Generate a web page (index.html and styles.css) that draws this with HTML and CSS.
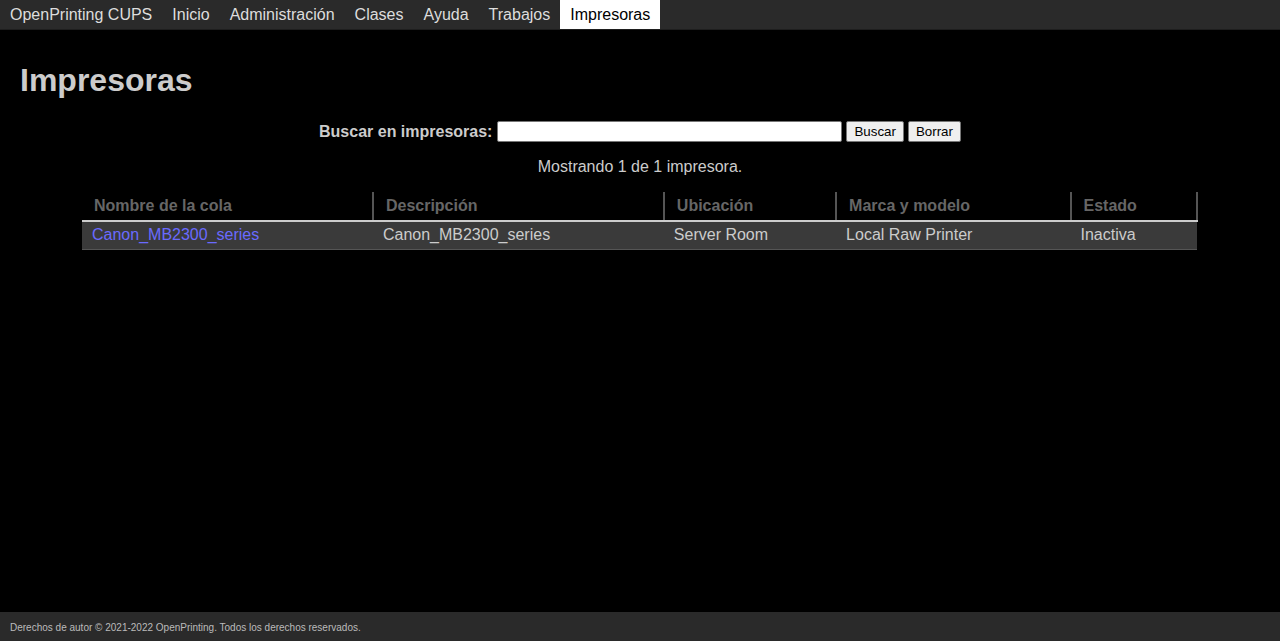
FILE: index.html
```html
<!DOCTYPE html>
<html lang="es">
<head>
<meta charset="utf-8">
<title>Impresoras - CUPS</title>
<link rel="stylesheet" href="styles.css">
</head>
<body>
<div class="page">
  <nav class="header">
    <a class="nav-item" href="#">OpenPrinting CUPS</a>
    <a class="nav-item" href="#">Inicio</a>
    <a class="nav-item" href="#">Administración</a>
    <a class="nav-item" href="#">Clases</a>
    <a class="nav-item" href="#">Ayuda</a>
    <a class="nav-item" href="#">Trabajos</a>
    <a class="nav-item active" href="#">Impresoras</a>
  </nav>
  <main class="body">
    <h1 class="title">Impresoras</h1>
    <form class="search">
      <label class="search-label">Buscar en impresoras:</label>
      <input class="search-input" type="text">
      <button class="btn" type="button">Buscar</button>
      <button class="btn" type="button">Borrar</button>
    </form>
    <p class="count">Mostrando 1 de 1 impresora.</p>
    <table class="list">
      <thead>
        <tr>
          <th class="c1">Nombre de la cola</th>
          <th class="c2">Descripción</th>
          <th class="c3">Ubicación</th>
          <th class="c4">Marca y modelo</th>
          <th class="c5">Estado</th>
        </tr>
      </thead>
      <tbody>
        <tr>
          <td><a class="link" href="#">Canon_MB2300_series</a></td>
          <td>Canon_MB2300_series</td>
          <td>Server Room</td>
          <td>Local Raw Printer</td>
          <td>Inactiva</td>
        </tr>
      </tbody>
    </table>
  </main>
  <footer class="footer">Derechos de autor © 2021-2022 OpenPrinting. Todos los derechos reservados.</footer>
</div>
</body>
</html>
```
FILE: styles.css
```css
html, body {
  margin: 0;
  padding: 0;
  height: 100%;
  background: #000;
  font-family: "Liberation Sans", Arial, sans-serif;
  color: #ccc;
}
.page {
  display: flex;
  flex-direction: column;
  min-height: 100vh;
}
.header {
  display: flex;
  background: #2a2a2a;
  height: 29px;
  border-bottom: 1px solid #1e1e1e;
}
.nav-item {
  display: block;
  padding: 0 10px;
  line-height: 29px;
  font-size: 16px;
  color: #ddd;
  text-decoration: none;
}
.nav-item.active {
  background: #fff;
  color: #000;
}
.body {
  flex: 1;
  padding: 0 20px;
}
.title {
  margin: 32px 0 0 0;
  font-size: 32px;
  line-height: 37px;
  font-weight: bold;
  color: #ccc;
}
.search {
  display: flex;
  justify-content: center;
  align-items: center;
  margin-top: 21px;
  height: 23px;
}
.search-label {
  font-weight: bold;
  font-size: 16px;
  color: #ccc;
  margin-right: 5px;
}
.search-input {
  width: 345px;
  height: 21px;
  box-sizing: border-box;
  border: 1px solid #767676;
  border-radius: 2px;
  background: #fff;
  padding: 1px 2px;
  margin: 0 4px 0 0;
}
.btn {
  font-family: "Liberation Sans", Arial, sans-serif;
  font-size: 13.33px;
  height: 21px;
  padding: 1px 7px;
  background: #efefef;
  color: #000;
  border: 1px solid #767676;
  border-radius: 2px;
  margin: 0 4px 0 0;
}
.btn:last-child { margin-right: 0; }
.count {
  text-align: center;
  font-size: 16px;
  margin: 14px 0 0 0;
  line-height: 20px;
}
.list {
  margin: 15px auto 0 auto;
  width: 1116px;
  border-collapse: collapse;
  font-size: 16px;
}
.list th {
  text-align: left;
  color: #666;
  font-weight: bold;
  padding: 4px 10px 4px 12px;
  height: 20px;
  border-right: 2px solid #555;
  border-bottom: 2px solid #ccc;
}
.list td {
  background: #3a3a3a;
  color: #ccc;
  padding: 3px 10px 4px 10px;
  height: 20px;
  border-bottom: 1px solid #555;
}
.c1 { width: 269px; }
.c2 { width: 268px; }
.c3 { width: 149px; }
.c4 { width: 212px; }
.c5 { width: 103px; }
.link {
  color: #6a6aff;
  text-decoration: none;
}
.footer {
  background: #2a2a2a;
  color: #bbb;
  font-size: 10px;
  height: 29px;
  line-height: 31px;
  padding: 0 10px;
}
```
